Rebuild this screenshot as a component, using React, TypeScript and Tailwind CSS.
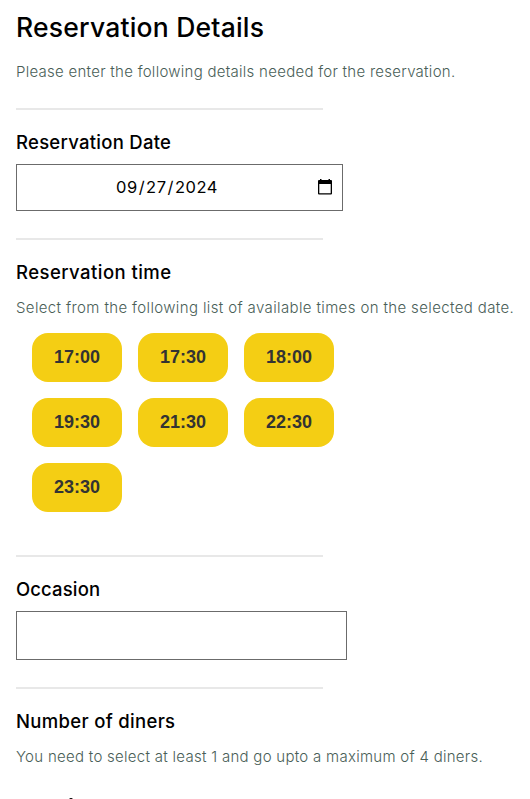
const times = ['17:00', '17:30', '18:00', '19:30', '21:30', '22:30', '23:30'];

function Divider({ className }: { className: string }) {
  return <hr className={`h-[2px] w-[307px] border-0 bg-[#e8e8e8] ${className}`} />;
}

export default function App() {
  return (
    <main className="h-[799px] w-[530px] overflow-hidden bg-white pl-4 font-['Inter','Liberation_Sans',sans-serif] text-black">
      <h1 className="mt-[11px] h-8 whitespace-nowrap text-[26.5px] leading-8 font-medium tracking-[0.21px]">Reservation Details</h1>
      <p className="mt-[19px] h-5 whitespace-nowrap text-[15px] leading-5 font-light tracking-[0.27px] text-[#495e57]">Please enter the following details needed for the reservation.</p>
      <Divider className="mt-[26px]" />

      <h2 className="mt-5 h-6 whitespace-nowrap text-[18.5px] leading-6 font-medium tracking-[0.27px]">Reservation Date</h2>
      <div className="mt-[10px] flex h-[47px] w-[327px] items-center border border-[#6b6b6b] pl-[99px] pr-[10px]">
        <span className="-mt-px flex w-[104px] whitespace-nowrap text-[16.5px] leading-5 tracking-[0.5px]">
          <span>09</span>
          <span className="px-px">/</span>
          <span>27</span>
          <span className="px-px">/</span>
          <span>2024</span>
        </span>
        <svg className="relative -top-px ml-auto h-4 w-[14px]" viewBox="0 0 14 16" fill="currentColor">
          <path fillRule="evenodd" d="M2 0h1.500v1h7V0H12v1h1a1 1 0 0 1 1 1v12.500a1 1 0 0 1-1 1H1a1 1 0 0 1-1-1V2a1 1 0 0 1 1-1h1zM1.300 5v9.200h11.400V5z" />
        </svg>
      </div>
      <Divider className="mt-[27px]" />

      <h2 className="mt-5 h-6 whitespace-nowrap text-[18.5px] leading-6 font-medium tracking-[0.45px]">Reservation time</h2>
      <p className="mt-[14px] h-5 whitespace-nowrap text-[15px] leading-5 font-light tracking-[0.37px] text-[#495e57]">Select from the following list of available times on the selected date.</p>
      <div className="mt-[15px] ml-4 grid w-[302px] grid-cols-3 gap-4">
        {times.map((time) => (
          <button key={time} className="h-[49px] w-[90px] rounded-2xl bg-[#f4ce14] font-['Liberation_Sans',Arial,sans-serif] text-[18px] font-bold text-[#333333]">{time}</button>
        ))}
      </div>
      <Divider className="mt-[43px]" />

      <h2 className="mt-5 h-6 whitespace-nowrap text-[18.5px] leading-6 font-medium tracking-[0.13px]">Occasion</h2>
      <div className="mt-[10px] h-[49px] w-[331px] border border-[#6b6b6b]" />
      <Divider className="mt-[27px]" />

      <h2 className="mt-5 h-6 whitespace-nowrap text-[18.5px] leading-6 font-medium tracking-[0.32px]">Number of diners</h2>
      <p className="mt-[14px] h-5 whitespace-nowrap text-[15px] leading-5 font-light tracking-[0.28px] text-[#495e57]">You need to select at least 1 and go upto a maximum of 4 diners.</p>
      <div className="mt-[31px] ml-[53px] h-[3px] w-[4px] rounded-t-full bg-black" />
    </main>
  );
}
